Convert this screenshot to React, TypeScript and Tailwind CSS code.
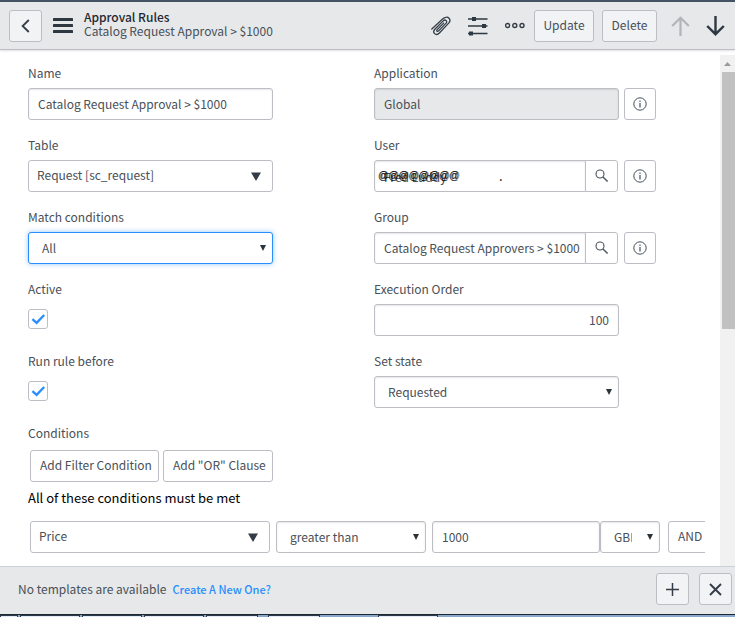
import { useState } from "react";
import type { ReactNode } from "react";

const controlBase =
  "h-8 w-full rounded-[3px] border bg-white text-[12px] leading-5 text-[#485058] outline-none";
const control = `${controlBase} border-[#bcbec4]`;
const focused = `${controlBase} border-[#278efc] shadow-[0_0_5px_rgba(39,142,252,0.5)]`;
const inset = "shadow-[inset_0_1px_2px_rgba(0,0,0,0.1)]";
const plainButton =
  "h-8 shrink-0 rounded-[3px] border border-[#bcbec4] bg-white pr-[6px] pb-[2px] pl-[9px] text-[12px] leading-5 text-[#485058] whitespace-nowrap";
const barButton =
  "flex h-8 shrink-0 items-center justify-center rounded-[3px] border border-[#bcbec4] bg-[#f1f3f5] text-[12px] leading-5 text-[#485058]";

function Field({ id, label, children }: { id: string; label: string; children: ReactNode }) {
  return (
    <div className="flex h-[57px] flex-col gap-[5px]">
      <label htmlFor={id} className="text-[12px] leading-5 text-[#485058]">
        {label}
      </label>
      {children}
    </div>
  );
}

function Select({
  id,
  value,
  label,
  big = false,
  className = control,
  pad = "pl-[13px] pr-6",
}: {
  id: string;
  value: string;
  label?: string;
  big?: boolean;
  className?: string;
  pad?: string;
}) {
  return (
    <div className="relative w-full">
      <select id={id} aria-label={label} className={`appearance-none ${className} ${pad}`}>
        <option>{value}</option>
      </select>
      {big ? (
        <svg className="pointer-events-none absolute top-3 right-3 h-[9px] w-[10px]" viewBox="0 0 10 9" fill="#343d47">
          <path d="M0 0.5H10L5 9Z" />
        </svg>
      ) : (
        <svg className="pointer-events-none absolute top-[13px] right-[7px] h-[6px] w-[6px]" viewBox="0 0 6 6" fill="#2b333b">
          <path d="M0 0H6L3 6Z" />
        </svg>
      )}
    </div>
  );
}

function InfoButton({ label }: { label: string }) {
  return (
    <button
      type="button"
      aria-label={label}
      className="flex size-8 shrink-0 items-center justify-center rounded-[3px] border border-[#bcbec4] bg-white text-[#485058]"
    >
      <svg className="size-[14px]" viewBox="0 0 14 14" fill="none" stroke="currentColor">
        <circle cx="7" cy="7" r="6.2" />
        <path d="M7 6v4.5M7 3.4v1.3" strokeWidth="1.2" />
      </svg>
    </button>
  );
}

function SearchButton({ label }: { label: string }) {
  return (
    <button
      type="button"
      aria-label={label}
      className="-ml-px flex h-8 w-[33px] shrink-0 items-center justify-center rounded-r-[3px] border border-[#bcbec4] bg-white text-[#485058]"
    >
      <svg className="size-[14px]" viewBox="0 0 14 14" fill="none" stroke="currentColor">
        <circle cx="5" cy="5" r="4" strokeWidth="1.1" />
        <path d="M8 8L12.6 12.4" strokeWidth="1.4" />
      </svg>
    </button>
  );
}

function Check({ id }: { id: string }) {
  const [on, setOn] = useState(true);
  return (
    <div className="pt-[5px]">
      <div className="relative size-5">
        <input
          id={id}
          type="checkbox"
          checked={on}
          onChange={() => setOn(!on)}
          className="block size-5 appearance-none rounded-[3px] border border-[#bcbec4] bg-white"
        />
        {on && (
          <svg className="pointer-events-none absolute inset-0 size-5" viewBox="0 0 20 20" fill="none" stroke="#278efc">
            <path d="M4.4 10.2L8.6 13.8L16.2 6" strokeWidth="2.3" />
          </svg>
        )}
      </div>
    </div>
  );
}

function Header() {
  return (
    <header className="flex h-12 shrink-0 items-center border-b border-[#bcbec4] bg-[#e6e8ea] pr-[10px] pl-[9px] text-[#343d47] shadow-[0_1px_2px_rgba(0,0,0,0.12)]">
      <button type="button" aria-label="Back" className={`${barButton} w-[33px]`}>
        <svg className="h-[14px] w-[9px]" viewBox="0 0 9 14" fill="none" stroke="#343d47" strokeWidth="1.8">
          <path d="M7.8 1L1.6 7L7.8 13" />
        </svg>
      </button>
      <button type="button" aria-label="Menu" className="ml-[11px] shrink-0">
        <svg className="h-[15px] w-5" viewBox="0 0 20 15" fill="#2e3842">
          <rect width="20" height="3" rx="0.6" />
          <rect y="6" width="20" height="3" rx="0.6" />
          <rect y="12" width="20" height="3" rx="0.6" />
        </svg>
      </button>
      <div className="ml-[11px] min-w-0 flex-1 pb-1 text-[12px] leading-[14px] whitespace-nowrap">
        <h1 className="font-medium text-[#1f2933]">Approval Rules</h1>
        <p className="text-[#485058]">Catalog Request Approval &gt; $1000</p>
      </div>
      <div className="flex shrink-0 items-center">
        <button type="button" aria-label="Attachments">
          <svg className="size-5" viewBox="0 0 20 20" fill="none" stroke="#343d47" strokeWidth="1.3" strokeLinecap="round">
            <path d="M0.8 13L11.6 3C13.8 1 16.6 0.7 18 2.2C19.4 3.7 19 6 17 7.9L8.4 17C6.8 18.6 4.8 18.8 3.6 17.6C2.4 16.4 2.6 14.5 4.1 13L12.2 4.9C13.2 4 14.4 3.8 15.2 4.6C16 5.4 15.8 6.5 14.9 7.4L7.6 14.9C7 15.5 6.4 15.5 6 15.1C5.6 14.7 5.7 14.1 6.2 13.6L12.6 7.1" />
          </svg>
        </button>
        <button type="button" aria-label="Personalize form" className="ml-[17px]">
          <svg className="size-5" viewBox="0 0 20 20" fill="#2e3842">
            <path d="M0 2.2h19.5v1.5H0zM0 9.2h19.5v1.5H0zM0 16.7h19.5v1.5H0z" />
            <rect x="4" y="1" width="4" height="4" />
            <rect x="14" y="8" width="4" height="4" />
            <rect x="1" y="15.5" width="4" height="4" />
          </svg>
        </button>
        <button type="button" aria-label="More options" className="ml-[17px]">
          <svg className="h-[7px] w-5" viewBox="0 0 20 7" fill="none" stroke="#343d47" strokeWidth="1.4">
            <circle cx="2.6" cy="3.5" r="2" />
            <circle cx="9.8" cy="3.5" r="2" />
            <circle cx="17" cy="3.5" r="2" />
          </svg>
        </button>
        <button type="button" className={`${barButton} ml-[9px] w-[60px] pb-[2px]`}>
          Update
        </button>
        <button type="button" className={`${barButton} ml-2 w-[55px] pb-[2px]`}>
          Delete
        </button>
        <button type="button" aria-label="Previous record" className="ml-[14px]">
          <svg className="h-5 w-[19px]" viewBox="0 0 19 20" fill="none" stroke="#b0b5ba" strokeWidth="2.2">
            <path d="M9.5 20V2M1.2 10L9.5 1.8L17.8 10" />
          </svg>
        </button>
        <button type="button" aria-label="Next record" className="ml-4">
          <svg className="h-5 w-[19px]" viewBox="0 0 19 20" fill="none" stroke="#2e3842" strokeWidth="2.4">
            <path d="M9.5 0V18M1.2 10L9.5 18.2L17.8 10" />
          </svg>
        </button>
      </div>
    </header>
  );
}

function Scrollbar() {
  return (
    <div className="mt-[5px] flex w-[15px] shrink-0 flex-col bg-[#f1f1f1]" aria-hidden="true">
      <div className="flex h-[17px] shrink-0 items-center justify-center">
        <svg className="h-1 w-[7px]" viewBox="0 0 7 4" fill="#9a9a9a">
          <path d="M3.5 0L7 4H0Z" />
        </svg>
      </div>
      <div className="min-h-0 flex-1">
        <div className="ml-[2px] h-[52%] bg-[#c1c1c1]" />
      </div>
    </div>
  );
}

const tabs = ["w-[18px]", "w-[60px]", "w-[60px]", "w-[60px]", "w-[52px]", "ml-2 w-[52px]", "ml-14 w-[60px]"];

export default function App() {
  return (
    <div className="flex h-screen flex-col overflow-hidden bg-white font-['Noto_Sans_CJK_SC','Noto_Sans',sans-serif]">
      <div className="h-[2px] shrink-0 bg-[#455464]" />
      <Header />
      <div className="flex min-h-0 flex-1">
        <main className="min-w-0 flex-1 overflow-hidden pt-[13px] pl-7">
          <div className="grid grid-cols-2">
            <div className="flex flex-col gap-[15px] pr-[101px]">
              <Field id="name" label="Name">
                <input id="name" className={`${control} ${inset} px-[9px] pb-[2px]`} defaultValue="Catalog Request Approval > $1000" />
              </Field>
              <Field id="table" label="Table">
                <Select id="table" value="Request [sc_request]" big pad="pb-[2px] pl-2 pr-8" />
              </Field>
              <Field id="match" label="Match conditions">
                <Select id="match" value="All" className={focused} />
              </Field>
              <Field id="active" label="Active">
                <Check id="active" />
              </Field>
              <Field id="before" label="Run rule before">
                <Check id="before" />
              </Field>
            </div>
            <div className="flex flex-col gap-[15px] pr-16">
              <Field id="application" label="Application">
                <div className="flex gap-[5px]">
                  <input
                    id="application"
                    readOnly
                    className="h-8 w-full min-w-0 rounded-[3px] border border-[#bcbec4] bg-[#e6e8ea] px-[9px] pb-[2px] text-[12px] leading-5 text-[#485058] shadow-[inset_0_1px_2px_rgba(0,0,0,0.1)] outline-none"
                    defaultValue="Global"
                  />
                  <InfoButton label="Application details" />
                </div>
              </Field>
              <Field id="user" label="User">
                <div className="flex">
                  <div className="relative min-w-0 flex-1">
                    <input id="user" className={`${control} ${inset} rounded-r-none px-[9px]`} defaultValue="Fred Luddy" />
                    <span className="pointer-events-none absolute top-[6px] left-1 font-['Liberation_Sans',sans-serif] text-[10px] leading-5 text-black [text-shadow:1px_0_0_#00000080]">
                      @@@@@@@@
                    </span>
                    <span className="pointer-events-none absolute top-[6px] left-[125px] text-[13px] leading-5 text-black">.</span>
                  </div>
                  <SearchButton label="Look up user" />
                  <div className="ml-[6px]">
                    <InfoButton label="User details" />
                  </div>
                </div>
              </Field>
              <Field id="group" label="Group">
                <div className="flex">
                  <input
                    id="group"
                    className={`${control} ${inset} min-w-0 flex-1 rounded-r-none pr-0 pb-[2px] pl-[9px]`}
                    defaultValue="Catalog Request Approvers > $1000"
                  />
                  <SearchButton label="Look up group" />
                  <div className="ml-[6px]">
                    <InfoButton label="Group details" />
                  </div>
                </div>
              </Field>
              <Field id="order" label="Execution Order">
                <div className="pr-[37px]">
                  <input id="order" className={`${control} ${inset} px-[9px] pb-[2px] text-right`} defaultValue="100" />
                </div>
              </Field>
              <Field id="state" label="Set state">
                <div className="pr-[37px]">
                  <Select id="state" value="Requested" className={`${control} ${inset}`} />
                </div>
              </Field>
            </div>
          </div>

          <section className="mt-[15px] mr-[15px] overflow-hidden">
            <h2 className="text-[12px] leading-5 text-[#485058]">Conditions</h2>
            <div className="mt-[7px] flex gap-1 pl-[2px]">
              <button type="button" className={plainButton}>Add Filter Condition</button>
              <button type="button" className={plainButton}>Add "OR" Clause</button>
            </div>
            <p className="mt-[6px] text-[13px] leading-5 text-black">All of these conditions must be met</p>
            <div className="mt-[13px] flex pl-[2px]">
              <div className="w-60 shrink-0">
                <Select id="cond-field" label="Field" value="Price" big pad="pb-[2px] pl-2 pr-8" />
              </div>
              <div className="ml-[6px] w-[150px] shrink-0">
                <Select id="cond-op" label="Operator" value="greater than" className={`${control} ${inset}`} />
              </div>
              <div className="ml-[6px] w-[168px] shrink-0">
                <input aria-label="Value" className={`${control} ${inset} px-[9px] pb-[2px]`} defaultValue="1000" />
              </div>
              <div className="w-[60px] shrink-0">
                <Select id="cond-cur" label="Currency" value="GBP" className={`${control} ${inset}`} pad="pl-[13px] pr-[27px]" />
              </div>
              <button type="button" className={`${plainButton} ml-2`}>AND</button>
            </div>
          </section>
        </main>
        <Scrollbar />
      </div>
      <footer className="flex h-12 shrink-0 items-center border-t border-[#cbd0d8] bg-[#e6e8ea] pr-[3px] pb-[3px] pl-[18px]">
        <p className="text-[12px] leading-5 text-[#485058]">No templates are available</p>
        <a href="#" className="ml-[6px] text-[11px] leading-5 font-medium text-[#278efc]">
          Create A New One?
        </a>
        <button type="button" aria-label="Add template" className={`${barButton} ml-auto w-[33px]`}>
          <svg className="size-[13px]" viewBox="0 0 13 13" stroke="#343d47" strokeWidth="1.5">
            <path d="M6.5 0V13M0 6.5H13" />
          </svg>
        </button>
        <button type="button" aria-label="Close" className={`${barButton} ml-[10px] w-[33px]`}>
          <svg className="size-[13px]" viewBox="0 0 13 13" stroke="#343d47" strokeWidth="1.9">
            <path d="M1 1L12 12M12 1L1 12" />
          </svg>
        </button>
      </footer>
      <div className="flex h-[3px] shrink-0 gap-[2px] border-t border-[#1d2733] bg-[#86a9cc]" aria-hidden="true">
        {tabs.map((w, i) => (
          <div key={i} className={`${w} shrink-0 border-x border-t border-[#2c3a4a] bg-[#dfeaf5]`} />
        ))}
      </div>
    </div>
  );
}
